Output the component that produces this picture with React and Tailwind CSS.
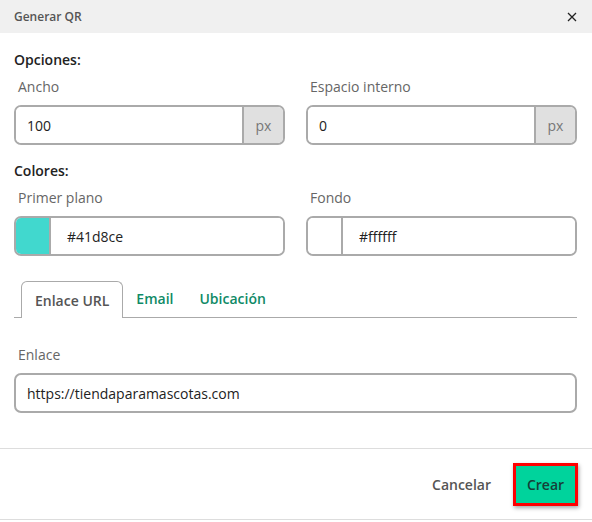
import React from "react";

const font = { fontFamily: '"Open Sans", "Noto Sans", sans-serif' };

function Label({ children }) {
  return <div className="pl-1 text-[14px] leading-5 text-[#666] mb-[8px]">{children}</div>;
}

function UnitInput({ value }) {
  return (
    <div className="flex h-10 rounded-[7px] border-2 border-[#aaa] overflow-hidden">
      <div className="flex-1 flex items-center pl-[11px] text-[14px] text-[#222] bg-white">{value}</div>
      <div className="w-[41px] flex items-center justify-center bg-[#e0e0e0] border-l-2 border-[#aaa] text-[14px] text-[#777]">px</div>
    </div>
  );
}

function ColorInput({ color, value }) {
  return (
    <div className="flex h-10 rounded-[7px] border-2 border-[#aaa] overflow-hidden">
      <div className="w-[35px] border-r-2 border-[#aaa]" style={{ backgroundColor: color }} />
      <div className="flex-1 flex items-center pl-[16px] text-[14px] text-[#222] bg-white">{value}</div>
    </div>
  );
}

export default function App() {
  return (
    <div className="w-[592px] h-[522px] bg-white flex flex-col" style={font}>
      <div className="h-[33px] bg-[#f0f0f0] flex items-center justify-between pl-[14px] pr-[14px]">
        <span className="text-[12px] font-semibold text-[#555]">Generar QR</span>
        <svg width="10" height="10" viewBox="0 0 10 10" className="mr-[1px]">
          <path d="M1 1 L9 9 M9 1 L1 9" stroke="#222" strokeWidth="1.3" />
        </svg>
      </div>

      <div className="pl-[14px] pr-[15px] pt-[17px]">
        <div className="text-[14px] leading-5 font-semibold text-[#222] mb-[7px]">Opciones:</div>
        <div className="grid grid-cols-2 gap-x-[21px]">
          <div>
            <Label>Ancho</Label>
            <UnitInput value="100" />
          </div>
          <div>
            <Label>Espacio interno</Label>
            <UnitInput value="0" />
          </div>
        </div>

        <div className="text-[14px] leading-5 font-semibold text-[#222] mt-[16px] mb-[7px]">Colores:</div>
        <div className="grid grid-cols-2 gap-x-[21px]">
          <div>
            <Label>Primer plano</Label>
            <ColorInput color="#41d8ce" value="#41d8ce" />
          </div>
          <div>
            <Label>Fondo</Label>
            <ColorInput color="#ffffff" value="#ffffff" />
          </div>
        </div>

        <div className="mt-[24px] flex items-end border-b border-[#aaa] pl-[7px]">
          <div className="h-[37px] px-[13px] flex items-center rounded-t-[6px] border border-b-0 border-[#aaa] bg-white -mb-px text-[14px] font-semibold text-[#555]">
            Enlace URL
          </div>
          <div className="h-[37px] px-[13px] flex items-center text-[14px] font-semibold text-[#0f8a66]">Email</div>
          <div className="h-[37px] px-[13px] flex items-center text-[14px] font-semibold text-[#0f8a66]">Ubicación</div>
        </div>

        <div className="mt-[27px]">
          <Label>Enlace</Label>
          <div className="h-10 rounded-[7px] border-2 border-[#aaa] flex items-center pl-[11px] text-[14px] text-[#222]">
            https://tiendaparamascotas.com
          </div>
        </div>
      </div>

      <div className="mt-[35px] border-t border-[#ddd] flex justify-end items-center gap-[22px] pr-[14px] pt-[14px] pb-[13px]">
        <span className="text-[14px] font-semibold text-[#555]">Cancelar</span>
        <button className="h-[43px] w-[65px] bg-[#00d39c] border-[3px] border-[#ff0000] text-[14px] font-semibold text-[#163f38] shadow-[1px_2px_4px_rgba(0,0,0,0.35)]">
          Crear
        </button>
      </div>
      <div className="border-t border-[#ddd]" />
    </div>
  );
}
